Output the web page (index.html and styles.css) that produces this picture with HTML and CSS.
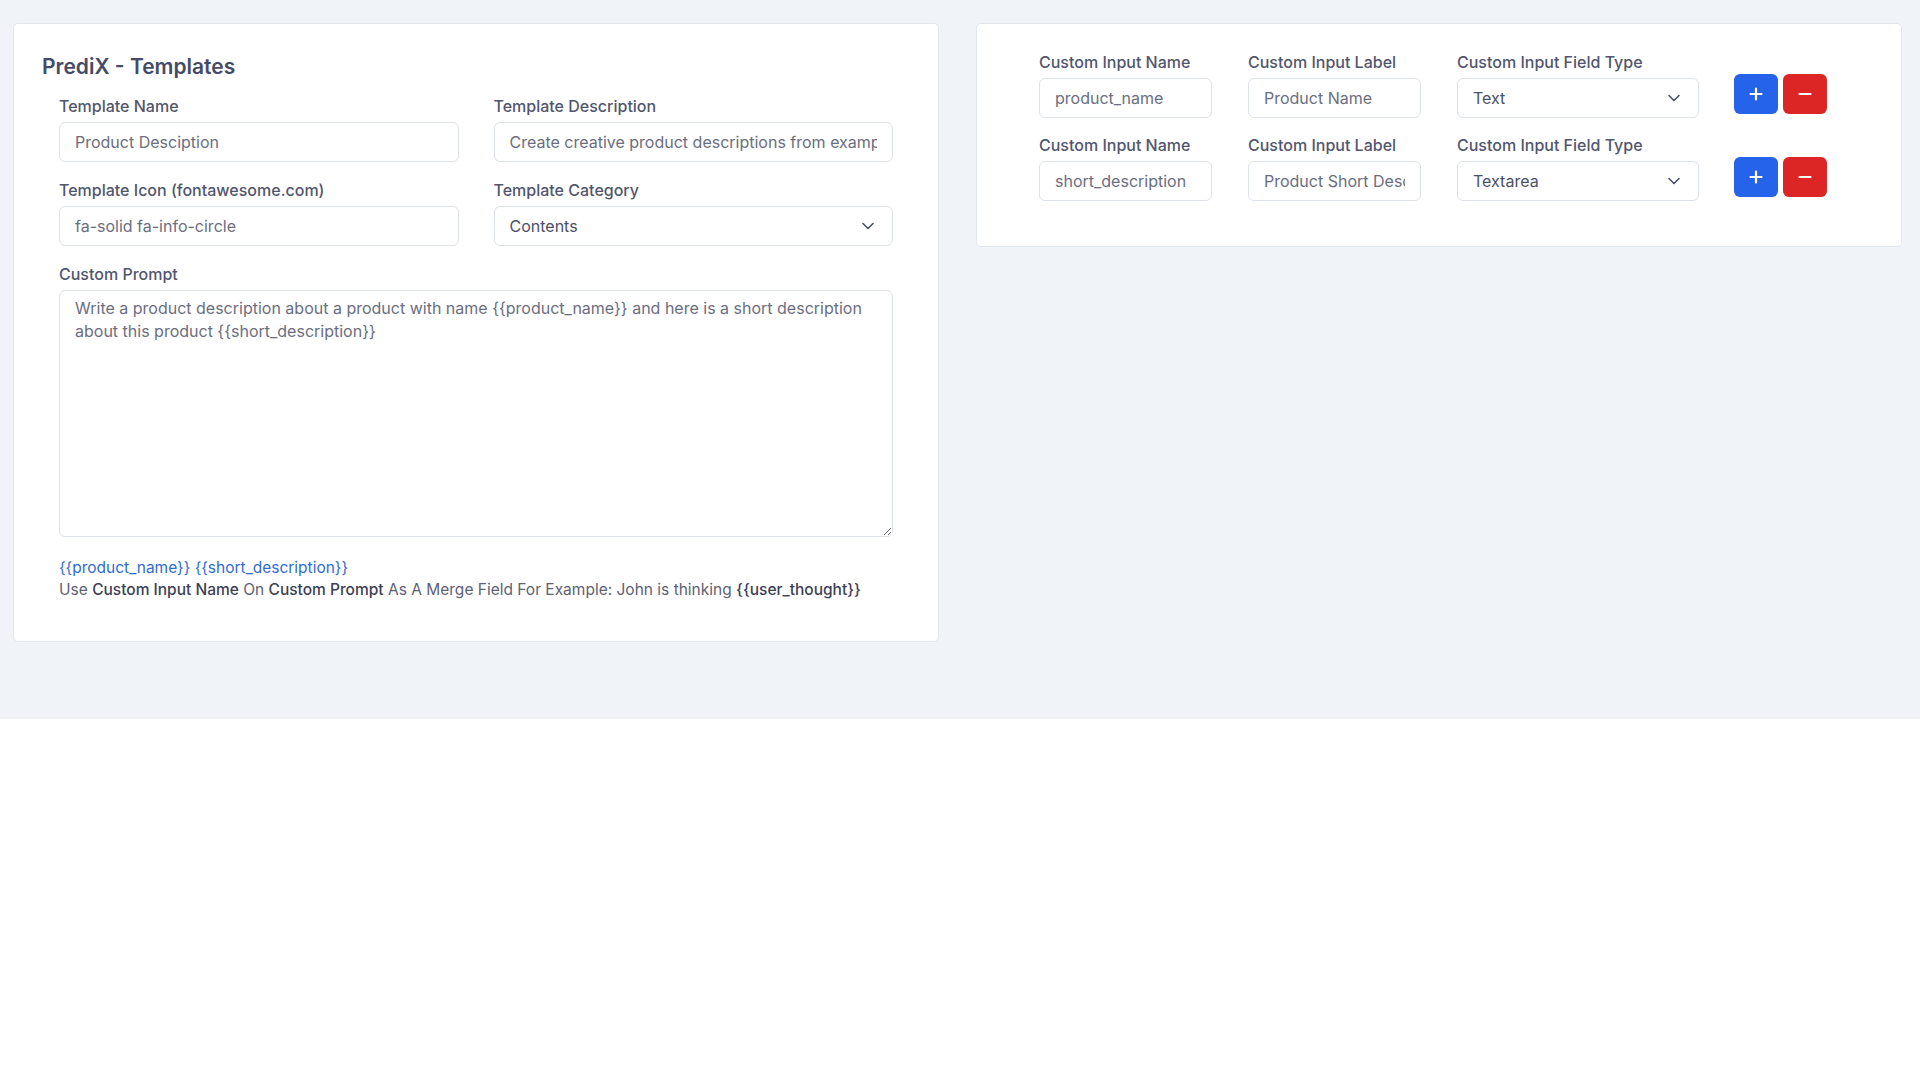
FILE: index.html
```html
<!DOCTYPE html>
<html lang="en">
<head>
    <meta charset="UTF-8">
    <meta name="viewport" content="width=device-width, initial-scale=1.0">
    <title>PrediX - Templates</title>
    <link rel="stylesheet" href="styles.css">
</head>
<body>

<div class="page">
    <div class="card card-main">
        <h1>PrediX - Templates</h1>
        <div class="form-grid">
            <div class="field">
                <label for="tplName">Template Name</label>
                <input type="text" id="tplName" value="Product Desciption" />
            </div>
            <div class="field">
                <label for="tplDesc">Template Description</label>
                <input type="text" id="tplDesc" value="Create creative product descriptions from examples" />
            </div>
            <div class="field">
                <label for="tplIcon">Template Icon (fontawesome.com)</label>
                <input type="text" id="tplIcon" value="fa-solid fa-info-circle" />
            </div>
            <div class="field">
                <label for="tplCat">Template Category</label>
                <div class="select-wrap">
                    <select id="tplCat">
                        <option>Contents</option>
                    </select>
                    <svg class="chevron" width="12" height="8" viewBox="0 0 12 8"><path d="M1 1.5l5 5 5-5" fill="none" stroke="#4b5068" stroke-width="1.6" stroke-linecap="round" stroke-linejoin="round"/></svg>
                </div>
            </div>
            <div class="field wide">
                <label for="tplPrompt">Custom Prompt</label>
                <textarea id="tplPrompt">Write a product description about a product with name {{product_name}} and here is a short description about this product {{short_description}}</textarea>
            </div>
        </div>
        <div class="merge-info">
            <p class="merge-fields">{{product_name}} {{short_description}}</p>
            <p class="merge-hint">Use <b>Custom Input Name</b> On <b>Custom Prompt</b> As A Merge Field For Example: John is thinking <b>{{user_thought}}</b></p>
        </div>
    </div>

    <div class="card card-inputs">
        <div class="input-row">
            <div class="field">
                <label>Custom Input Name</label>
                <input type="text" value="product_name" />
            </div>
            <div class="field">
                <label>Custom Input Label</label>
                <input type="text" value="Product Name" />
            </div>
            <div class="field">
                <label>Custom Input Field Type</label>
                <div class="select-wrap">
                    <select><option>Text</option></select>
                    <svg class="chevron" width="12" height="8" viewBox="0 0 12 8"><path d="M1 1.5l5 5 5-5" fill="none" stroke="#4b5068" stroke-width="1.6" stroke-linecap="round" stroke-linejoin="round"/></svg>
                </div>
            </div>
            <div class="row-actions">
                <button class="btn btn-add"><svg width="14" height="14" viewBox="0 0 14 14"><path d="M7 1.5v11M1.5 7h11" stroke="#fff" stroke-width="2.2" stroke-linecap="round"/></svg></button>
                <button class="btn btn-remove"><svg width="14" height="14" viewBox="0 0 14 14"><path d="M1.5 7h11" stroke="#fff" stroke-width="2.2" stroke-linecap="round"/></svg></button>
            </div>
        </div>
        <div class="input-row">
            <div class="field">
                <label>Custom Input Name</label>
                <input type="text" value="short_description" />
            </div>
            <div class="field">
                <label>Custom Input Label</label>
                <input type="text" value="Product Short Description" />
            </div>
            <div class="field">
                <label>Custom Input Field Type</label>
                <div class="select-wrap">
                    <select><option>Textarea</option></select>
                    <svg class="chevron" width="12" height="8" viewBox="0 0 12 8"><path d="M1 1.5l5 5 5-5" fill="none" stroke="#4b5068" stroke-width="1.6" stroke-linecap="round" stroke-linejoin="round"/></svg>
                </div>
            </div>
            <div class="row-actions">
                <button class="btn btn-add"><svg width="14" height="14" viewBox="0 0 14 14"><path d="M7 1.5v11M1.5 7h11" stroke="#fff" stroke-width="2.2" stroke-linecap="round"/></svg></button>
                <button class="btn btn-remove"><svg width="14" height="14" viewBox="0 0 14 14"><path d="M1.5 7h11" stroke="#fff" stroke-width="2.2" stroke-linecap="round"/></svg></button>
            </div>
        </div>
    </div>
</div>

</body>
</html>
```

FILE: styles.css
```css
body {
    margin: 0;
    background: #fff;
    font-family: Inter, "Noto Sans", sans-serif;
    color: #4b5068;
}
.page {
    background: #f0f3f8;
    padding: 23px 18px 77px 13px;
    display: grid;
    grid-template-columns: 926px 926px;
    column-gap: 37px;
    align-items: start;
}
.card {
    background: #fff;
    border: 1px solid #e2e7ef;
    border-radius: 5px;
}
.card-main {
    padding: 30px 28px 40px 28px;
}
.card-main h1 {
    margin: 0 0 15px;
    font-size: 21px;
    line-height: 25px;
    font-weight: 600;
    color: #454b66;
}
.form-grid {
    display: grid;
    grid-template-columns: 1fr 1fr;
    column-gap: 35px;
    row-gap: 16px;
    padding: 0 17px;
}
.field {
    display: flex;
    flex-direction: column;
}
.field.wide {
    grid-column: 1 / 3;
}
label {
    font-size: 16px;
    line-height: 24px;
    font-weight: 500;
    color: #51566e;
    margin-bottom: 4px;
}
input, select, textarea {
    font-family: inherit;
    font-size: 16px;
    color: #6b6e80;
    border: 1px solid #dce1ea;
    border-radius: 6px;
    background: #fff;
    box-sizing: border-box;
    outline: none;
}
input, select {
    height: 40px;
    padding: 0 15px;
    width: 100%;
}
.select-wrap {
    position: relative;
}
select {
    appearance: none;
    -webkit-appearance: none;
    color: #4b5068;
}
.chevron {
    position: absolute;
    right: 19px;
    top: 16px;
    pointer-events: none;
}
textarea {
    height: 247px;
    padding: 6px 15px;
    line-height: 23px;
    resize: vertical;
    width: 100%;
}
.merge-info {
    padding: 20px 17px 0;
    font-size: 15.5px;
    line-height: 22px;
}
.merge-info p {
    margin: 0;
}
.merge-fields {
    color: #2f6bd6;
}
.merge-hint {
    color: #5d6175;
}
.merge-hint b {
    font-weight: 500;
    color: #3c4157;
}
.card-inputs {
    padding: 26px 28px 45px 62px;
}
.input-row {
    display: grid;
    grid-template-columns: 173px 173px 242px auto;
    column-gap: 36px;
    align-items: end;
}
.input-row + .input-row {
    margin-top: 15px;
}
.row-actions {
    display: flex;
    gap: 5px;
    margin-bottom: 4px;
    margin-left: -1px;
}
.btn {
    width: 44px;
    height: 40px;
    border: none;
    border-radius: 6px;
    display: flex;
    align-items: center;
    justify-content: center;
    cursor: pointer;
    padding: 0;
}
.btn-add {
    background: #2563eb;
}
.btn-remove {
    background: #dc2626;
}
```
